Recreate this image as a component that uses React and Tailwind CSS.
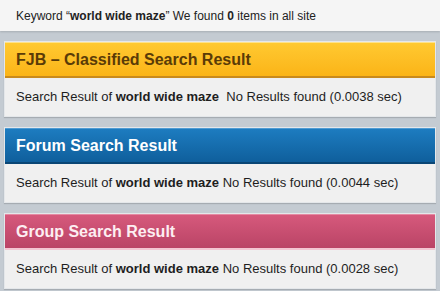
const panels = [
  {
    title: 'FJB – Classified Search Result',
    head: 'bg-gradient-to-b from-[#ffc930] to-[#fbb416] border-t-[#ffe38a] border-b-[#c98a1c] text-[#5a3b07]',
    time: '0.0038',
    gap: true,
  },
  {
    title: 'Forum Search Result',
    head: 'bg-gradient-to-b from-[#1d7cc0] to-[#0f5f9c] border-t-[#4f9bd3] border-b-[#0a4675] text-white',
    time: '0.0044',
  },
  {
    title: 'Group Search Result',
    head: 'bg-gradient-to-b from-[#d6597c] to-[#ba4466] border-t-[#e58aa3] border-b-[#f3c6d2] text-[#fdeef2]',
    time: '0.0028',
  },
]

function Panel({ title, head, time, gap }) {
  return (
    <div className="mx-[4px] border border-[#e4e7ea] shadow-[0_1px_1px_rgba(0,0,0,0.15)]">
      <div className={`flex h-[36px] items-center border-t border-b-2 px-[11px] text-[16px] font-bold ${head}`}>
        {title}
      </div>
      <div className="flex h-[38px] items-center bg-[#f0f0f0] px-[11px] text-[13px] text-[#1e1e1e]">
        <span>
          Search Result of <b>world wide maze</b>
          {gap ? '\u00a0 ' : ' '}No Results found ({time} sec)
        </span>
      </div>
    </div>
  )
}

export default function App() {
  return (
    <div className="h-[291px] w-[440px] overflow-hidden bg-[#c4cbd2] font-['Liberation_Sans',Arial,sans-serif]">
      <div className="flex h-[31px] items-center bg-[#f5f5f5] pl-[16px] text-[12px] text-[#222] shadow-[0_1px_2px_rgba(0,0,0,0.15)]">
        <span>
          Keyword “<b>world wide maze</b>” We found <b>0</b> items in all site
        </span>
      </div>
      <div className="flex flex-col gap-[10px] pt-[10px]">
        {panels.map((p) => (
          <Panel key={p.title} {...p} />
        ))}
      </div>
    </div>
  )
}
